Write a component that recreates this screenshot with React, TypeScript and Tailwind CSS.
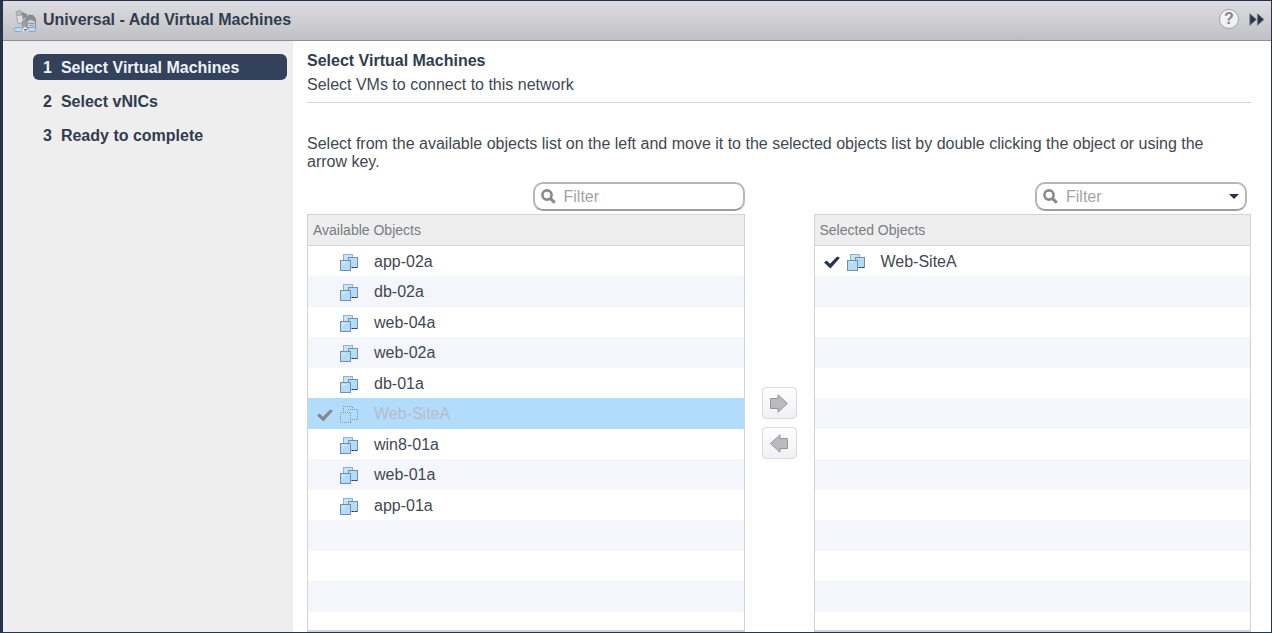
import React, { useState } from "react";

const steps = ["Select Virtual Machines", "Select vNICs", "Ready to complete"];

const available = [
  "app-02a",
  "db-02a",
  "web-04a",
  "web-02a",
  "db-01a",
  "Web-SiteA",
  "win8-01a",
  "web-01a",
  "app-01a",
];

const ROWS = 13;

function VmIcon({ ghost = false }: { ghost?: boolean }) {
  if (ghost) {
    return (
      <svg viewBox="0 0 18 18" className="size-[18px] shrink-0" fill="none" stroke="#8b939b" strokeDasharray="1 1" shapeRendering="crispEdges" aria-hidden="true">
        <path d="M3.5 6V1.5h9V4M8 4.5h9.5v10H12M.5 7.5h10v10H.5z" />
      </svg>
    );
  }
  return (
    <svg viewBox="0 0 18 18" className="size-[18px] shrink-0" stroke="#7f8c99" shapeRendering="crispEdges" aria-hidden="true">
      <path d="M3.5 1.5h9v8h-9z" fill="#c3e5fc" stroke="#86b7d8" />
      <path d="M8.5 4.5h9v10h-9z" fill="#b1dcfc" />
      <path d="M9 14.5h9" stroke="#2a3c52" strokeDasharray="2 1" />
      <path d="M.5 7.5h10v10H.5z" fill="#b1dcfc" />
      <path d="M2 9.5h4M3 11.5h1" stroke="#dcf0fe" />
    </svg>
  );
}

function Check({ muted = false }: { muted?: boolean }) {
  return (
    <svg viewBox="0 0 16 13" className="h-[13px] w-4 shrink-0" fill={muted ? "#85898e" : "#26364a"} aria-hidden="true">
      <path d="M0 6.5 2.6 4.6 6 7.8 13.2.6 16 1.8 6.4 12.6z" />
    </svg>
  );
}

function FilterBox({ id, name, menu = false }: { id: string; name: string; menu?: boolean }) {
  return (
    <div className="flex h-[29px] w-[212px] items-center rounded-[10px] border-2 border-[#b4b6bb] border-b-[#9a9da3] bg-white px-[6px]">
      <label htmlFor={id} className="shrink-0">
        <svg viewBox="0 0 15 15" className="size-[15px]" fill="none" stroke="#858a90" aria-hidden="true">
          <circle cx="6" cy="6" r="4.6" strokeWidth="2.6" />
          <path d="m9.6 9.6 4.2 4.2" strokeWidth="3" />
        </svg>
      </label>
      <input
        id={id}
        aria-label={name}
        placeholder="Filter"
        className="h-full w-full min-w-0 bg-transparent pt-px pl-2 text-base leading-5 text-[#303d4d] outline-none placeholder:text-[#a0a4a9]"
      />
      {menu && (
        <button type="button" aria-label="Filter options" className="shrink-0">
          <svg viewBox="0 0 10 5" className="h-[5px] w-[10px]" fill="#26364a" aria-hidden="true">
            <path d="M0 0h10L5 5z" />
          </svg>
        </button>
      )}
    </div>
  );
}

function ObjectPanel({
  title,
  filterId,
  items,
  selected,
  chosen = false,
}: {
  title: string;
  filterId: string;
  items: string[];
  selected?: string;
  chosen?: boolean;
}) {
  return (
    <section className="flex min-w-0 flex-1 flex-col">
      <div className={chosen ? "mb-[3px] flex justify-end pr-1" : "mb-[3px] flex justify-end"}>
        <FilterBox id={filterId} name={`Filter ${title}`} menu={chosen} />
      </div>
      <div className="flex flex-1 flex-col border border-b-2 border-[#d2d3d8]">
        <h2 className="flex h-[31px] shrink-0 items-center border-b border-[#d2d3d8] bg-[#eeeeee] px-[5px] text-sm text-[#777c82]">
          {title}
        </h2>
        <ul className="flex flex-1 flex-col">
          {Array.from({ length: ROWS }, (_, i) => {
            const name = items[i];
            const active = name !== undefined && name === selected;
            const size = i === ROWS - 1 ? "min-h-[18px] flex-1" : i % 2 ? "h-[31px]" : "h-[30px]";
            const tint = active ? "bg-[#b1dcfc]" : i % 2 ? "bg-[#f5f6fb]" : "bg-white";
            return (
              <li key={i} className={`flex shrink-0 items-center px-[9px] ${size} ${tint}`}>
                {name && (
                  <>
                    <span className="flex w-[23px] pt-[3px]">{(active || chosen) && <Check muted={active} />}</span>
                    <span className="flex w-[34px] pt-px">
                      <VmIcon ghost={active} />
                    </span>
                    <span className={active ? "pt-px text-[#b9bcc3]" : "pt-px text-[#3f4854]"}>{name}</span>
                  </>
                )}
              </li>
            );
          })}
        </ul>
      </div>
    </section>
  );
}

function MoveButton({ label, flip = false }: { label: string; flip?: boolean }) {
  return (
    <button
      type="button"
      aria-label={label}
      className="flex h-8 w-[35px] items-center justify-center rounded-[4px] border border-[#d9dade] bg-linear-to-b from-white to-[#f0f0f3]"
    >
      <svg viewBox="0 0 18 19" className={flip ? "h-[19px] w-[18px] -scale-x-100" : "h-[19px] w-[18px]"} fill="#b9bbbe" stroke="#92969b" aria-hidden="true">
        <path d="M.5 4.5H8V.8l9.5 8.7L8 18.2v-3.7H.5z" />
      </svg>
    </button>
  );
}

export default function App() {
  const [step, setStep] = useState(0);
  return (
    <div className="flex min-h-screen flex-col border border-l-[3px] border-[#26344e] bg-white font-['Liberation_Sans',Arial,sans-serif] text-base text-[#3f4854]">
      <header className="flex h-10 shrink-0 items-center border-b border-[#8d9096] bg-linear-to-b from-[#dddce1] via-[#cfcfd3] to-[#bfc0c4] pr-[6px] pb-[3px] pl-[10px]">
        <svg viewBox="0 0 24 24" className="mt-[3px] size-6 shrink-0" aria-hidden="true">
          <path d="M3 2.5 5 3l1.5-2.5L8 2.5l2 .5-1 3-4 1-2-1.5z" fill="#b7b9bd" stroke="#9a9da2" strokeDasharray="2 1" />
          <path d="M7.5 5 10 3.5l4 1.5.5 3.5-3 .5L9 12H4z" fill="#898d93" />
          <path d="M3.5 6.5 9 6l1.500 5L8 14.500H5z" fill="#dedee1" stroke="#a4a7ab" />
          <path d="M8 13.500 12.500 9l2.500 2.500V18l-6 .500z" fill="#9b9ea3" />
          <path d="M13 8.500 16 5.500l4 .500 3 3.500v9l-4 2-6-2z" fill="#898d93" />
          <path d="M14.500 12.500 17 10.500l5 2v5.500h-7.500z" fill="#cbcdd1" />
          <path d="M15 14.500h6.500M16.500 16.500h4.500" stroke="#94989d" />
          <rect x="1" y="18.500" width="8.500" height="4" rx="2" fill="#b1dcfc" stroke="#8da9bb" />
          <rect x="15" y="18.500" width="8" height="4" rx="2" fill="#b1dcfc" stroke="#8da9bb" />
          <path d="M12 17.500 15.500 22h-6.500z" fill="#ededed" />
          <path d="M11.500 20h2v1.500h-2z" fill="#3e4a58" />
        </svg>
        <h1 className="ml-[6px] flex-1 pt-px text-base font-bold text-[#303c50]">Universal - Add Virtual Machines</h1>
        <button
          type="button"
          aria-label="Help"
          className="flex size-5 items-center justify-center rounded-full border border-[#a1a3a8] bg-[#f2f2f3] text-base leading-none font-bold text-[#82868c]"
        >
          ?
        </button>
        <button type="button" aria-label="Expand" className="ml-[10px]">
          <svg viewBox="0 0 16 13" className="h-[13px] w-4" fill="#26364a" stroke="#7e848d" strokeWidth=".8" aria-hidden="true">
            <path d="M.8.6v11.8l6.6-5.9zM8.4.6v11.8L15 6.5z" />
          </svg>
        </button>
      </header>

      <div className="flex flex-1">
        <nav className="w-[290px] shrink-0 bg-[#eeeeee] pt-[13px] pr-[6px] pl-[30px]">
          <ol className="flex flex-col gap-2">
            {steps.map((label, i) => (
              <li key={label}>
                <button
                  type="button"
                  onClick={() => setStep(i)}
                  aria-current={i === step ? "step" : undefined}
                  className={
                    i === step
                      ? "flex h-[26px] w-full items-center gap-[9px] rounded-[6px] bg-[#33415a] px-[10px] pt-[2px] font-bold text-[#eef2f8]"
                      : "flex h-[26px] w-full items-center gap-[9px] rounded-[6px] px-[10px] pt-[2px] font-bold text-[#303c50]"
                  }
                >
                  <span>{i + 1}</span>
                  <span>{label}</span>
                </button>
              </li>
            ))}
          </ol>
        </nav>

        <main className="flex min-w-0 flex-1 flex-col pt-[10px] pr-5 pl-[14px]">
          <h2 className="leading-5 font-bold text-[#303c50]">Select Virtual Machines</h2>
          <p className="mt-1 border-b border-[#d2d3d8] pb-[7px] leading-5">Select VMs to connect to this network</p>
          <p className="mt-8 pr-6 leading-[18px]">
            Select from the available objects list on the left and move it to the selected objects list by double clicking the object or using the
            arrow key.
          </p>
          <div className="mt-[11px] flex flex-1">
            <ObjectPanel title="Available Objects" filterId="filter-available" items={available} selected="Web-SiteA" />
            <div className="flex w-[69px] shrink-0 flex-col items-center gap-2 pt-[205px]">
              <MoveButton label="Add to selected" />
              <MoveButton label="Remove from selected" flip />
            </div>
            <ObjectPanel title="Selected Objects" filterId="filter-selected" items={["Web-SiteA"]} chosen />
          </div>
        </main>
      </div>
    </div>
  );
}
